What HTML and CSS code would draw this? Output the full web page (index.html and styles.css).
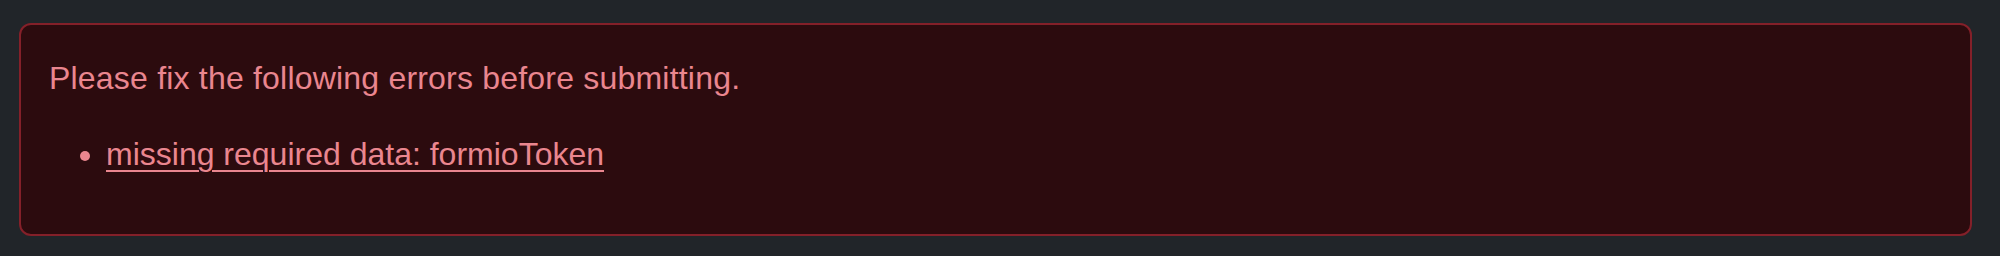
FILE: index.html
```html
<!DOCTYPE html>
<html lang="en">
<head>
<meta charset="utf-8">
<title>Form errors</title>
<link rel="stylesheet" href="styles.css">
</head>
<body>
<div class="page">
  <div class="alert alert-danger" role="alert">
    <p class="alert-title">Please fix the following errors before submitting.</p>
    <ul class="error-list">
      <li><a class="error-link" href="#formioToken">missing required data: formioToken</a></li>
    </ul>
  </div>
</div>
</body>
</html>
```

FILE: styles.css
```css
html, body {
  margin: 0;
  padding: 0;
  background: #212529;
}

body {
  font-family: "Liberation Sans", Arial, Helvetica, sans-serif;
  font-size: 32px;
  line-height: 48px;
  color: #ea868f;
}

.page {
  padding: 23px 28px 20px 19px;
}

.alert {
  background: #2c0b0e;
  border: 2px solid #842029;
  border-radius: 12px;
  padding: 29px 29px 29px 28px;
}

.alert-title {
  margin: 0 0 28px 0;
  letter-spacing: 0.2px;
}

.error-list {
  margin: 0 0 27px 0;
  padding-left: 57px;
}

.error-link {
  color: #ea868f;
  text-decoration: underline;
  text-underline-offset: 5px;
  text-decoration-thickness: 2px;
}
```
